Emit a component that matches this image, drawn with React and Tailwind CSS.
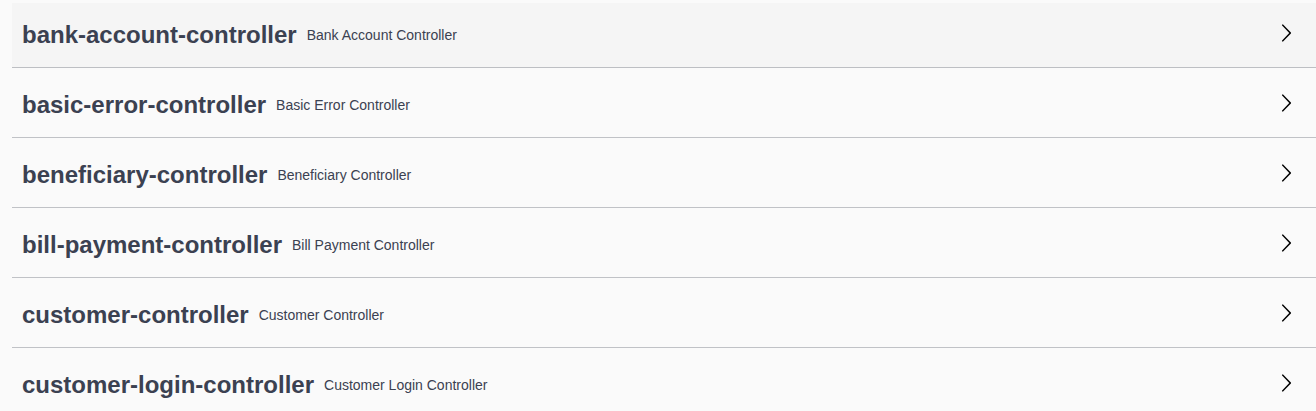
import React from 'react';

const tags = [
  { name: 'bank-account-controller', desc: 'Bank Account Controller' },
  { name: 'basic-error-controller', desc: 'Basic Error Controller' },
  { name: 'beneficiary-controller', desc: 'Beneficiary Controller' },
  { name: 'bill-payment-controller', desc: 'Bill Payment Controller' },
  { name: 'customer-controller', desc: 'Customer Controller' },
  { name: 'customer-login-controller', desc: 'Customer Login Controller' },
];

const Arrow = () => (
  <svg width="20" height="20" viewBox="0 0 20 20" className="shrink-0 mb-[4px]">
    <path d="M13.25 10L6.109 2.58c-.268-.27-.268-.707 0-.979.268-.27.701-.27.969 0l7.83 7.908c.268.271.268.709 0 .979l-7.83 7.908c-.268.271-.701.27-.969 0-.268-.269-.268-.707 0-.979L13.25 10z" />
  </svg>
);

export default function App() {
  return (
    <div className="min-h-screen bg-[#fafafa] pt-[3px] pl-[12px] font-['Liberation_Sans',Arial,sans-serif] text-[#3b4151]">
      {tags.map((tag, i) => (
        <div key={tag.name} className="mb-[5px]">
          {/* Tag header row */}
          <h3
            className={`flex items-center h-[65px] pl-[10px] pr-[20px] border-b border-[rgba(59,65,81,0.3)] cursor-pointer ${
              i === 0 ? 'bg-[rgba(0,0,0,0.02)]' : ''
            }`}
          >
            <span className="text-[24px] font-bold leading-none">{tag.name}</span>
            <small className="flex-1 px-[10px] text-[14px] font-normal">{tag.desc}</small>
            <Arrow />
          </h3>
        </div>
      ))}
    </div>
  );
}
